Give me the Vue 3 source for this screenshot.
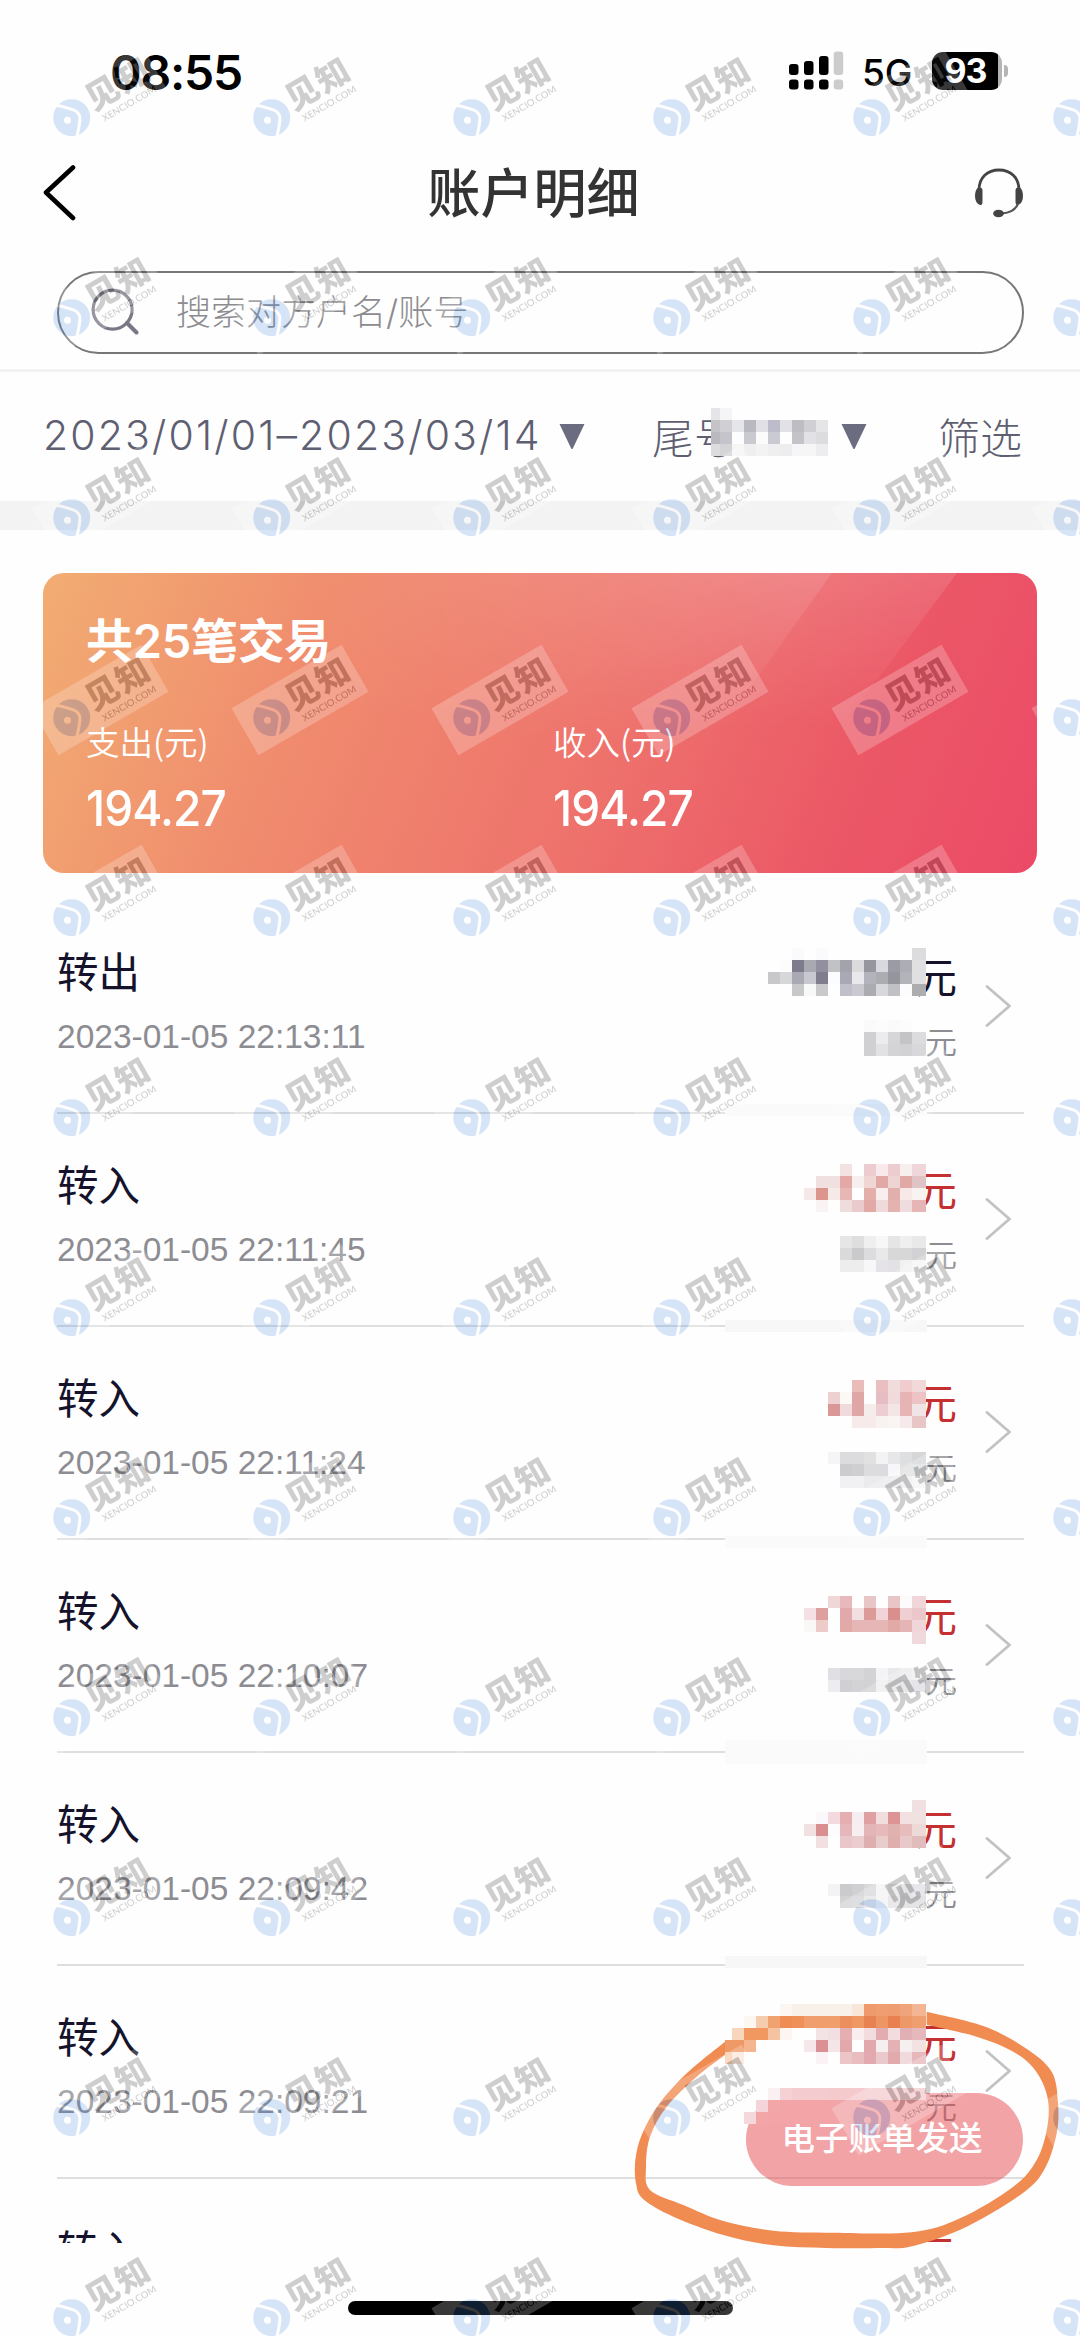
<script setup>
const records = [
  { type: '转出', time: '2023-01-05 22:13:11', out: true },
  { type: '转入', time: '2023-01-05 22:11:45' },
  { type: '转入', time: '2023-01-05 22:11:24' },
  { type: '转入', time: '2023-01-05 22:10:07' },
  { type: '转入', time: '2023-01-05 22:09:42' },
  { type: '转入', time: '2023-01-05 22:09:21' },
  { type: '转入', time: '2023-01-05 22:08:56' },
]

// Privacy mosaic: x, y of the first 12px cell, then one colour per cell ("-" leaves a cell clear).
const strips = [
  [708, 408, 'e5e4e8 f5f5f7'],
  [708, 420, 'c4c4c8 d0d0d4 e6e6ea b9b9c2 e0e0e6 bcbccb e2e2e6 bdbdc3 d0d0d4 e5e5e8'],
  [708, 432, 'b9b9bf c4c4ca fdfdfd c9c9d0 fbfbfb cacad2 fefefe c4c4c8 e2e2e6 dcdcde'],
  [708, 444, 'dcdcde d4d4d6 f5f5f5 efeff0 f3f3f3 efeff0 ededed f6f6f8 f6f6f6 ededf0'],

  [792, 948, 'fafafc - fafafc - - - - - - - dcdcde'],
  [780, 960, 'fcfcfc 7e7c8c a9a9b1 92909f c2c2c5 a3a3ab dbdbde 96969f d8d8de 9b9ba6 adadb6 e0e0e2'],
  [768, 972, 'c8c8cb d7d7d9 a9a9b4 c8c8d0 807e8e fcfcff a9a9b6 e9e9ed b3b3bc acacb1 95959e b3b3ba e0e0e2'],
  [792, 984, 'c8c8ca f7f9f9 c9c9cb - c0c0ca c9c9cf abacb1 d8d8dc c0c1c4 fcfcfc adadb0'],
  [864, 1020, 'fafafa fcfcfc fafafa fcfcfc'],
  [864, 1032, 'd0d0d2 ececee d6d6d8 c4c4c6 dcdcde'],
  [864, 1044, 'd0d0d2 e2e2e4 d4d4d6 d2d2d4 d8d8da'],

  [840, 1164, 'f2e2e2 - edcccf f7e9ec edcccf f7eeee efd6d8'],
  [816, 1176, 'f0e0e0 f0e0e0 e2a9a7 f5efef f0d5d5 e1a9a6 eed5d4 e1a9a6 dfc3c5'],
  [804, 1188, 'f6e8e8 db958c f6eae8 e6b7b4 - e2afab f8eef0 e2b0ac f6e9e7 f8f3f1'],
  [816, 1200, 'faf3f3 - efdcdc ebcacd e2a9a6 eedadb e4b3b0 efdcde e6b6b6'],
  [840, 1236, 'e6e6e6 dedede efefef f7f7f7 e5e5e5 efefef e9e9e9'],
  [840, 1248, 'dadada cacacc dcdcde e9e9e9 d8d8d8 d7d7d7 d2d2d4'],
  [840, 1260, 'ededed ededed f7f7f7 e5e3e7 e2e2e4 f1f1f1 f5f5f5'],

  [852, 1380, 'e9bcba - e9bfc2 f1dcdd f0cccf f1d8d9'],
  [828, 1392, 'edd0d0 fbf8f5 dea6a5 - e6bdc3 f1dadb e6b4b5 eec3c6'],
  [828, 1404, 'da9797 f1dadb dea6a5 f5ecec ebcdd2 f4e6e6 e6b4b5 f1e4e6'],
  [852, 1416, 'f6eaea f6eaea f8f3f1 f8f5f3 f6e9ec e9c6c6'],
  [828, 1452, 'f5f5f5 dcdcde dcdcde e1e1e1 f3f3f3 e7e7e9 dedfe1 d5d7d9'],
  [840, 1464, 'ccccce cfcfd1 dcdcde dcdce0 f7f7f9 e0e0e2 dfe0e2'],
  [840, 1476, 'f1f1f3 f1f1f3 ebebed ebebed ebebee eeeef0 f5f5f5'],

  [828, 1596, 'f1d6d8 e7b9bc - e8c5c7 - e8c5c7 fcfafa f0d6d8'],
  [804, 1608, 'f4e1e5 de9f9f - e1a9ac f2dfe1 dc9a99 f0d4d8 d98f8d eecfd2 ebc7cb'],
  [804, 1620, 'faf8f6 eccbc9 - e1a9a8 e6b5b5 e6b5b5 e6b5b5 e1aaa7 e5b4b5 f0d6d8'],
  [912, 1632, 'f0d9dc'],
  [828, 1668, 'e0e0e4 d8d8da d8d8da d3d3d5 f4f4f6 e8e8ea ebebed eeeef0'],
  [828, 1680, 'ededf0 d0d0d4 d3d3d5 d2d2d4 eeeef0 e5e5e7 e0e0e4 dedee4'],

  [912, 1800, 'f1e0e1'],
  [816, 1812, 'faf8fa f2dade e5aeb1 f6edf0 dfa0a1 f1dcde dc9494 f3e0e1 f1e2e2'],
  [804, 1824, 'f2e1e3 d98f8f fdfbfd e6b7ba f7efef e4b5b6 e6b9bb dfb2b0 e6bcbd eed9d9'],
  [816, 1836, 'f2dfe1 - e9c6ca ebcdd0 deafaf e9cdcd dfafae e9c8ca e1bcbd'],
  [828, 1884, 'f3f3f3 cbcbcd d0d0d2 d9d9db f3f3f5 e9e9eb dedee2 e0e0e6'],
  [840, 1896, 'd3d3d5 d6d6d8 e5e5e7 f3f3f5 e3e3e5 dcdce0 dcdce0'],

  [780, 2004, 'fbf6f2 f8f1ea f8f1ea f8f1ea f8f1ea f8f1ea f8e6d8 ee9a6c ef9e72 ef9d70 f0a47c f4b593'],
  [744, 2016, 'fcf7f1 f6ccae f1a271 ef8c54 ef9058 f09e6b f09e6b f09e6b ec8f5f ef9863 e98252 ed9564 e88050 ee9868 ef9e70'],
  [732, 2028, 'f8d6be f09860 f09860 f6c3a0 fdf5f2 - - f3e3e5 f2dfe2 e5aeb0 f8eef0 f2dcde e1adb0 f2dcdf e0b0b5 e6b8bc'],
  [720, 2040, 'ef9a66 ef9a66 f5b68f - - - - f6e7ea da9094 f4e6e8 e2a9ad fefefe e2a9ad f6efef e2b2b4 f6efef f2e2e2'],
  [720, 2052, 'f8cdb0 fbe8dc - - - - - - faf2f4 - ecc5c8 e9bcbf e2aab0 ebc8cb e1abad f0dadc e6b8bc'],
  [768, 2088, 'faeff1 f5d0d4 f4ccd0 f4ccd0 f4ccd0 f4cacd f4cacd f4cacd f4ccd0 f4ccd0 f4ccd0 f4ccd0 f4ccd0'],
  [756, 2100, 'f4d4d8 f2a6a8 f2a4a6 f2a4a6 f2a4a6 f2a4a6 f2a4a6 f2a4a6 f2a4a6 f2a4a6 f2a4a6 f2a4a6 f2a4a6 f2a4a6'],
  [744, 2112, 'f4d8dc f2a6a8 f2a4a6 f2a4a6 f2a4a6 f2a4a6 f2a4a6 f2a4a6 f2a4a6 f2a4a6 f2a4a6 f2a4a6 f2a4a6 f2a4a6 f2a4a6'],
]

const cells = strips.flatMap(([x0, y, row]) =>
  row.split(' ').flatMap((c, i) => {
    if (c === '-') return []
    let x = x0 + i * 12
    let w = 12
    if (x === 708) { x = 711; w = 9 }
    if (x === 720 && y > 2000) { x = 725; w = 7 }
    if (x === 912) w = 14
    return [{ x, y, w, fill: '#' + c }]
  })
)

const blanks = [
  { y: 1104, h: 12, fill: '#fafafa' },
  { y: 1320, h: 12, fill: '#f7f7f7' },
  { y: 1536, h: 12, fill: '#fafafa' },
  { y: 1740, h: 24, fill: '#fafafa' },
  { y: 1956, h: 12, fill: '#f7f7f7' },
]

function smooth(p, first) {
  let d = `${first}${p[0]}`
  for (let i = 0; i < p.length - 1; i++) {
    const a = p[i - 1] || p[i], b = p[i], c = p[i + 1], e = p[i + 2] || c
    d += `C${b[0] + (c[0] - a[0]) / 6},${b[1] + (c[1] - a[1]) / 6} ${c[0] - (e[0] - b[0]) / 6},${c[1] - (e[1] - b[1]) / 6} ${c}`
  }
  return d
}
const outer = [[980, 275], [1150, 318], [1275, 383], [1355, 455], [1374, 550], [1370, 640], [1335, 745], [1270, 818], [1100, 920], [940, 978], [850, 984], [680, 984], [520, 976], [370, 945], [220, 890], [130, 838], [108, 790], [106, 720], [125, 645], [175, 555], [260, 460], [375, 365]]
const inner = [[375, 405], [290, 470], [200, 560], [150, 650], [138, 740], [150, 810], [250, 855], [370, 903], [520, 932], [700, 938], [935, 937], [1080, 895], [1240, 800], [1310, 720], [1342, 620], [1342, 530], [1305, 450], [1240, 395], [1130, 350], [980, 314]]
const loop = smooth(outer, 'M') + smooth(inner, 'L') + 'Z'
</script>

<template>
  <div class="screen">
    <header class="status">
      <span class="clock">08:55</span>
      <div class="status-right">
        <svg class="signal" width="56" height="40" viewBox="0 0 56 40">
          <rect x="0" y="13" width="9.5" height="11" rx="3" />
          <rect x="15" y="10" width="9.5" height="14" rx="3" />
          <rect x="30" y="5" width="9.5" height="19" rx="3" />
          <rect x="44.7" y="0.5" width="9.5" height="23.5" rx="3" fill="#ccc" />
          <rect x="0" y="28.5" width="9.5" height="10" rx="3" />
          <rect x="15" y="28.5" width="9.5" height="10" rx="3" />
          <rect x="30" y="28.5" width="9.5" height="10" rx="3" />
          <rect x="44.7" y="28.5" width="9.5" height="10" rx="3" fill="#ccc" />
        </svg>
        <span class="net">5G</span>
        <div class="battery"><span>93</span></div>
        <i class="nub"></i>
      </div>
    </header>

    <nav class="bar">
      <svg width="34" height="58" viewBox="0 0 34 58" fill="none" stroke="#000" stroke-width="4.6" stroke-linecap="round" stroke-linejoin="round">
        <path d="M30 3.5L3 28.5L30 54" />
      </svg>
      <h1>账户明细</h1>
      <svg width="50" height="50" viewBox="0 0 50 50" fill="none">
        <path d="M5 22C5 9.500 13.500 2 25 2S45 9.500 45 22" stroke="#444" stroke-width="2.800" />
        <path d="M4 19.500Q8.500 19 8.500 22V33.500Q8.500 37.500 6 37Q1 35 1 28Q1 22 4 19.500Z" fill="#444" />
        <path d="M46 19.500Q41.500 19 41.500 22V33.500Q41.500 37.500 44 37Q49 35 49 28Q49 22 46 19.500Z" fill="#444" />
        <path d="M44 36Q40 45 27 45.500" stroke="#555" stroke-width="2" />
        <ellipse cx="24.500" cy="45.500" rx="5.300" ry="3.800" fill="#444" />
      </svg>
    </nav>

    <div class="search-wrap">
      <div class="search">
        <svg width="48" height="48" viewBox="0 0 48 48" fill="none" stroke="#787884" stroke-width="3.200" stroke-linecap="round">
          <circle cx="21.600" cy="21.600" r="19.500" />
          <path d="M36 35L45.500 44.500" stroke-width="4" />
        </svg>
        <span>搜索对方户名/账号</span>
      </div>
    </div>

    <div class="filters">
      <span class="range">2023/01/01–2023/03/14</span>
      <svg class="tri" width="28" height="27" viewBox="0 0 28 27"><path d="M1.500 1H26.500L14.800 25.500Q14 26.500 13.200 25.500Z" /></svg>
      <span class="tail">尾号</span>
      <svg class="tri" width="28" height="27" viewBox="0 0 28 27"><path d="M1.500 1H26.500L14.800 25.500Q14 26.500 13.200 25.500Z" /></svg>
      <span class="pick">筛选</span>
    </div>
    <div class="gap"></div>

    <section class="card">
      <svg class="shine" width="994" height="300" viewBox="0 0 994 300">
        <defs>
          <linearGradient id="sh" x1="0" y1="0" x2="0" y2="1">
            <stop offset="0" stop-color="#fff" stop-opacity=".12" />
            <stop offset="1" stop-color="#fff" stop-opacity="0" />
          </linearGradient>
          <linearGradient id="sx" x1="0" y1="0" x2="1" y2="0">
            <stop offset=".25" stop-color="#fff" stop-opacity="0" />
            <stop offset=".8" stop-color="#fff" />
          </linearGradient>
          <mask id="fade"><rect width="994" height="300" fill="url(#sx)" /></mask>
        </defs>
        <g mask="url(#fade)">
          <path d="M0 0H789L716 102L650 180H0Z" fill="url(#sh)" />
          <path d="M0 0H914L841 98L790 160H0Z" fill="url(#sh)" />
        </g>
      </svg>
      <h2>共25笔交易</h2>
      <div class="sums">
        <div><label>支出(元)</label><b>194.27</b></div>
        <div><label>收入(元)</label><b>194.27</b></div>
      </div>
    </section>

    <main class="list">
      <article v-for="r in records" :key="r.time" class="row">
        <div class="left">
          <div class="type">{{ r.type }}</div>
          <div class="time">{{ r.time }}</div>
        </div>
        <div class="right">
          <div class="amount" :class="{ out: r.out }">元</div>
          <div class="balance">元</div>
        </div>
        <svg class="chev" width="26" height="44" viewBox="0 0 26 44" fill="none" stroke="#c2c2c4" stroke-width="2.800" stroke-linecap="round" stroke-linejoin="round">
          <path d="M2 2.500L24.500 22L2 41.500" />
        </svg>
      </article>
    </main>
    <footer class="foot"><i></i></footer>

    <button class="send">电子账单发送</button>

    <svg class="overlay" width="1080" height="2337" viewBox="0 0 1080 2337">
      <defs>
        <pattern id="mark" width="200" height="200" patternUnits="userSpaceOnUse">
          <g transform="translate(100 100)">
            <g transform="rotate(-30)">
              <rect x="-63.500" y="-27" width="127" height="54" fill="#fff" />
              <text class="m1" x="5.500" y="7" text-anchor="middle">见</text>
              <text class="m1" x="40.500" y="7" text-anchor="middle">知</text>
              <text class="m2" x="-7" y="21" textLength="61">XENCIO.COM</text>
            </g>
            <g transform="translate(-28.300 17.700)">
              <circle r="18.500" fill="#4589df" />
              <path d="M-19 -13Q-10 -12 1 -8Q8.500 -5.500 8.200 2Q7.500 11 5 19.500" fill="none" stroke="#fff" stroke-width="3" />
              <circle cx="-4.200" cy="2.500" r="3.500" fill="#fff" />
            </g>
          </g>
        </pattern>
      </defs>
      <path :d="loop" transform="translate(600 1920) scale(.33333)" fill="#f08b52" />
      <g shape-rendering="crispEdges">
        <rect v-for="(b, i) in blanks" :key="'b' + i" x="725" :y="b.y" width="202" :height="b.h" :fill="b.fill" />
        <rect v-for="(c, i) in cells" :key="i" :x="c.x" :y="c.y" :width="c.w" height="12" :fill="c.fill" />
      </g>
      <rect width="1080" height="2337" fill="url(#mark)" opacity=".22" />
    </svg>
  </div>
</template>

<style>
body { margin: 0; background: #fefefe; }
</style>

<style scoped>
.screen {
  position: relative;
  width: 1080px;
  height: 2337px;
  overflow: hidden;
  display: flex;
  flex-direction: column;
  background: #fefefe;
  font-family: Inter, "Noto Sans CJK SC", sans-serif;
}
.status {
  height: 142px;
  flex: none;
  box-sizing: border-box;
  padding: 0 72px 0 110px;
  display: flex;
  align-items: center;
  justify-content: space-between;
}
.clock { font-size: 48px; font-weight: 600; line-height: 48px; letter-spacing: -1.200px; padding-top: 3px; }
.status-right { display: flex; align-items: center; }
.net { font-size: 37px; font-weight: 450; margin-left: 17px; width: 70px; line-height: 40px; padding-top: 4px; }
.battery {
  width: 70px;
  height: 37.5px;
  border-radius: 11px;
  background: linear-gradient(90deg, #000 66px, #b5b5b5 66px);
  color: #fff;
  font-size: 34px;
  font-weight: 700;
  line-height: 38px;
  display: flex;
  justify-content: center;
}
.battery span { letter-spacing: -1px; margin-right: 3px; }
.nub { width: 4px; height: 12px; margin-left: 2px; border-radius: 0 5px 5px 0; background: #b5b5b5; }

.bar {
  height: 101px;
  flex: none;
  padding: 0 56px 0 43px;
  display: flex;
  align-items: center;
}
.bar h1 { flex: 1; margin: 2px 0 0 16px; text-align: center; font-size: 53px; font-weight: 500; line-height: 60px; color: #333; }

.search-wrap { height: 129px; flex: none; padding: 28px 56px 0 57px; border-bottom: 3px solid #f2f2f2; box-sizing: border-box; }
.search {
  height: 83px;
  box-sizing: border-box;
  border: 2.500px solid #777;
  border-radius: 42px;
  display: flex;
  align-items: center;
  padding-left: 32px;
}
.search span { margin-left: 37px; font-size: 35px; font-weight: 300; color: #8c8c90; line-height: 40px; padding-bottom: 2px; }
.search svg { margin-top: -1px; }

.filters { height: 129px; flex: none; box-sizing: border-box; padding-bottom: 3px; display: flex; align-items: center; color: #5f5f72; font-size: 41px; font-weight: 300; padding-left: 43px; }
.range { width: 515px; letter-spacing: 2.150px; white-space: nowrap; flex: none; }
.tri { fill: #6b6c80; margin-top: 3px; flex: none; }
.tail { margin-left: 66px; width: 188px; font-size: 42px; }
.pick { margin-left: 70px; font-size: 42px; }
.gap { height: 29px; flex: none; background: #f3f3f3; }

.card {
  position: relative;
  width: 994px;
  height: 300px;
  flex: none;
  box-sizing: border-box;
  margin: 43px 0 0 43px;
  border-radius: 21px;
  overflow: hidden;
  padding: 38px 0 0 43px;
  color: #fff;
  background: linear-gradient(112deg, #f2ad72 0%, #f08c6e 27%, #ee716c 58%, #eb5866 80%, #ec4a67 100%);
}
.shine { position: absolute; left: 0; top: 0; }
.card h2 { position: relative; margin: 0; font-size: 47px; font-weight: 600; line-height: 60px; letter-spacing: -.3px; }
.sums { position: relative; display: flex; margin-top: 47px; }
.sums div { width: 467px; flex: none; display: flex; flex-direction: column; }
.sums label { font-family: "Noto Sans CJK SC", sans-serif; font-size: 33.500px; line-height: 46px; font-weight: 350; }
.sums b { font-size: 50px; font-weight: 450; line-height: 60px; margin-top: 14px; letter-spacing: -1px; transform: scaleX(.92); transform-origin: 0 50%; }

.list { height: 1370px; flex: none; overflow: hidden; margin: 0 56px 0 57px; padding-top: 28px; box-sizing: border-box; }
.row { height: 213px; box-sizing: border-box; border-bottom: 2.500px solid #dedede; display: flex; }
.left { flex: 1; padding-top: 47px; }
.type { font-size: 41.500px; line-height: 50px; color: #15132c; }
.time { font-family: "Liberation Sans", sans-serif; font-size: 33.500px; line-height: 40px; margin-top: 19px; color: #8c8c92; }
.right { padding-top: 52px; text-align: right; width: 100px; }
.amount { font-size: 42px; line-height: 50px; color: #c42f30; }
.amount.out { color: #15132c; }
.balance { font-size: 32px; line-height: 40px; margin-top: 20px; color: #8c8c92; font-weight: 350; }
.chev { margin: 83px 13px 0 28px; }

.foot { flex: 1; display: flex; justify-content: center; align-items: flex-start; padding-top: 58px; }
.foot i { width: 385px; height: 14px; border-radius: 7px; background: #000; }

.send {
  position: absolute;
  left: 746px;
  top: 2093px;
  width: 277px;
  height: 93px;
  padding: 0 5px 2px 0;
  border: 0;
  border-radius: 47px;
  background: rgba(229, 72, 77, .5);
  color: #fff;
  font: 500 33.500px/89px Inter, "Noto Sans CJK SC", sans-serif;
}
.overlay { position: absolute; left: 0; top: 0; pointer-events: none; }
.m1 { font: 900 33px "Noto Sans CJK SC", sans-serif; fill: #222; }
.m2 { font: 500 9.500px Lato, sans-serif; fill: #222; }
</style>
